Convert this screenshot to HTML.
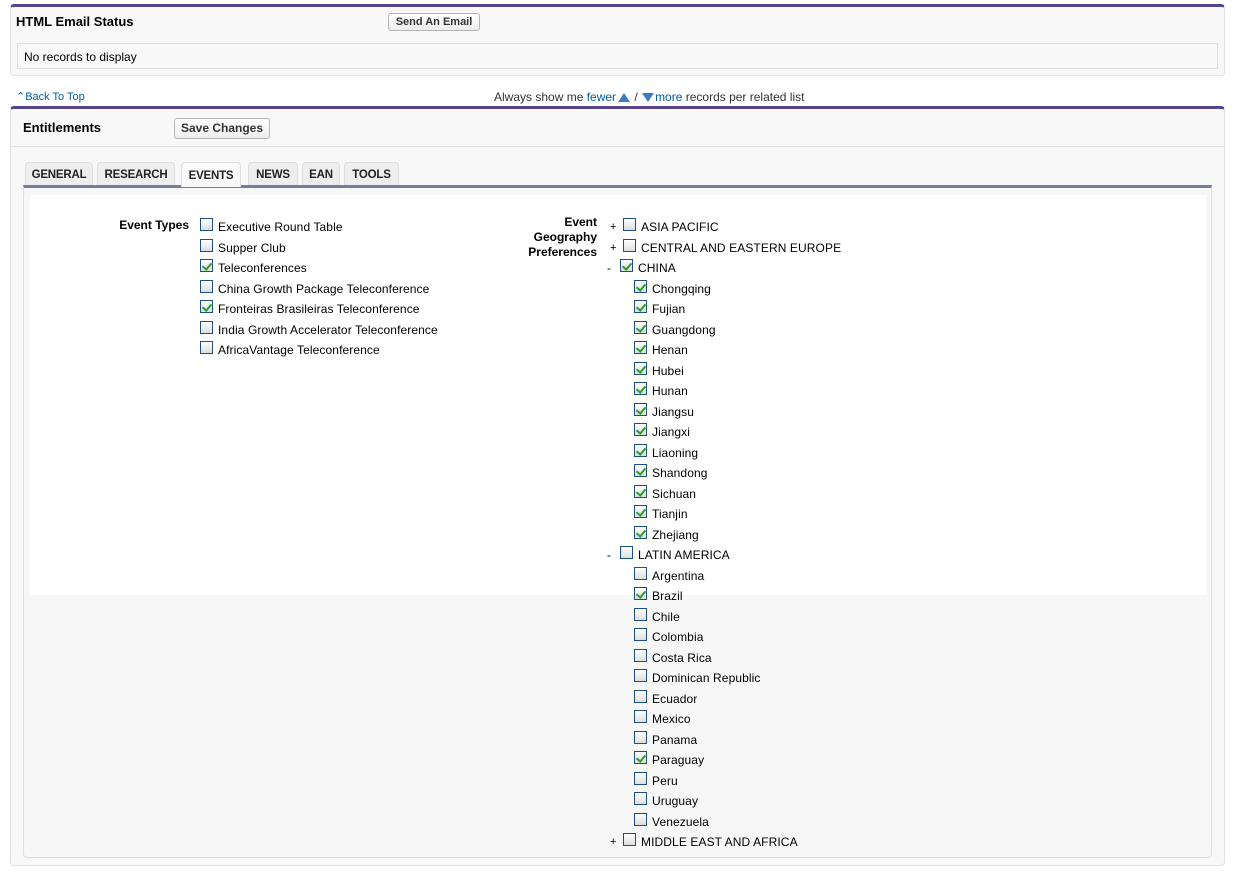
<!DOCTYPE html>
<html><head><meta charset="utf-8">
<style>
*{box-sizing:border-box;margin:0;padding:0}
body{width:1234px;height:874px;background:#fff;font-family:"Liberation Sans",Arial,sans-serif;font-size:12px;color:#000;position:relative;overflow:hidden}
.abs{position:absolute}
.panel{position:absolute;background:#f8f8f8;border:1px solid #e0e3e5;border-top:3px solid #56458c;border-radius:4px}
.btn{position:absolute;background:linear-gradient(#fff,#eee);border:1px solid #b5b5b5;border-radius:3px;font-weight:bold;font-size:12px;color:#333;text-align:center}
.tab{position:absolute;top:162px;height:24px;background:#eee;border:1px solid #ddd;border-bottom:none;border-radius:4px 4px 0 0;font-weight:bold;font-size:11.5px;letter-spacing:-0.2px;color:#222;text-align:center;line-height:24px}
.cb{position:absolute;width:13px;height:13px;border:1px solid #1d4f80;background:linear-gradient(#fff,#ddd);}
.cb.on::after{content:"";position:absolute;left:3px;top:1px;width:4px;height:7px;border:solid #2a9d2a;border-width:0 2px 2px 0;transform:rotate(40deg)}
.t{position:absolute;line-height:16px;font-size:12px;white-space:nowrap;margin-top:1px;letter-spacing:0.1px}
.lbl{position:absolute;font-weight:bold;font-size:12px;text-align:right;line-height:15px}
a{color:#015ba7;text-decoration:none}
.tri{display:inline-block;width:0;height:0;border-left:6px solid transparent;border-right:6px solid transparent;vertical-align:middle}
</style></head><body>

<div class="panel" style="left:10px;top:4px;width:1215px;height:72px"></div>
<div class="abs" style="left:16px;top:14px;font-weight:bold;font-size:13px">HTML Email Status</div>
<div class="btn" style="left:388px;top:13px;width:92px;height:18px;line-height:16px;font-size:11px">Send An Email</div>
<div class="abs" style="left:17px;top:43px;width:1201px;height:26px;border:1px solid #dcdfe2;background:#f8f8f8;padding:6px 0 0 6px">No records to display</div>

<div class="abs" style="left:16px;top:90px;font-size:11px"><a>&#8963;Back To Top</a></div>
<div class="abs" style="left:494px;top:90px;font-size:12px;color:#333">Always show me <a>fewer</a><span class="tri" style="border-bottom:9px solid #3d7cc4;margin:0 1px 0 2px"></span> / <span class="tri" style="border-top:9px solid #3d7cc4;margin:0 1px"></span><a>more</a> records per related list</div>

<div class="panel" style="left:10px;top:106px;width:1215px;height:760px"></div>
<div class="abs" style="left:10px;top:146px;width:1215px;height:1px;background:#e0e0e0"></div>
<div class="abs" style="left:23px;top:120px;font-weight:bold;font-size:13px">Entitlements</div>
<div class="btn" style="left:174px;top:118px;width:96px;height:21px;line-height:19px">Save Changes</div>

<div class="tab" style="left:25px;width:68px">GENERAL</div>
<div class="tab" style="left:97px;width:78px">RESEARCH</div>
<div class="tab" style="left:181px;width:60px;top:162px;height:25px;background:#fafafa;z-index:2;line-height:26px">EVENTS</div>
<div class="tab" style="left:248px;width:50px">NEWS</div>
<div class="tab" style="left:302px;width:38px">EAN</div>
<div class="tab" style="left:344px;width:55px">TOOLS</div>

<div class="abs" style="left:23px;top:185px;width:1189px;height:673px;border:1px solid #ddd;border-top:3px solid #737e9b;border-radius:0 0 4px 4px;background:#f7f7f7"></div>
<div class="abs" style="left:30px;top:195px;width:1176px;height:400px;background:#fff"></div>

<div class="lbl" style="left:100px;top:218px;width:89px">Event Types</div>
<div class="cb" style="left:200px;top:218px"></div><div class="t" style="left:218px;top:218px">Executive Round Table</div>
<div class="cb" style="left:200px;top:239px"></div><div class="t" style="left:218px;top:239px">Supper Club</div>
<div class="cb on" style="left:200px;top:259px"></div><div class="t" style="left:218px;top:259px">Teleconferences</div>
<div class="cb" style="left:200px;top:280px"></div><div class="t" style="left:218px;top:280px">China Growth Package Teleconference</div>
<div class="cb on" style="left:200px;top:300px"></div><div class="t" style="left:218px;top:300px">Fronteiras Brasileiras Teleconference</div>
<div class="cb" style="left:200px;top:321px"></div><div class="t" style="left:218px;top:321px">India Growth Accelerator Teleconference</div>
<div class="cb" style="left:200px;top:341px"></div><div class="t" style="left:218px;top:341px">AfricaVantage Teleconference</div>

<div class="lbl" style="left:500px;top:215px;width:97px">Event<br>Geography<br>Preferences</div>

<div class="t" style="left:610px;top:218px;font-size:11px">+</div><div class="cb" style="left:623px;top:218px"></div><div class="t" style="left:641px;top:218px">ASIA PACIFIC</div>
<div class="t" style="left:610px;top:239px;font-size:11px">+</div><div class="cb" style="left:623px;top:239px"></div><div class="t" style="left:641px;top:239px">CENTRAL AND EASTERN EUROPE</div>
<div class="t" style="left:607px;top:259px">-</div><div class="cb on" style="left:620px;top:259px"></div><div class="t" style="left:638px;top:259px">CHINA</div>

<div class="cb on" style="left:634px;top:280px"></div><div class="t" style="left:652px;top:280px">Chongqing</div>
<div class="cb on" style="left:634px;top:300px"></div><div class="t" style="left:652px;top:300px">Fujian</div>
<div class="cb on" style="left:634px;top:321px"></div><div class="t" style="left:652px;top:321px">Guangdong</div>
<div class="cb on" style="left:634px;top:341px"></div><div class="t" style="left:652px;top:341px">Henan</div>
<div class="cb on" style="left:634px;top:362px"></div><div class="t" style="left:652px;top:362px">Hubei</div>
<div class="cb on" style="left:634px;top:382px"></div><div class="t" style="left:652px;top:382px">Hunan</div>
<div class="cb on" style="left:634px;top:403px"></div><div class="t" style="left:652px;top:403px">Jiangsu</div>
<div class="cb on" style="left:634px;top:423px"></div><div class="t" style="left:652px;top:423px">Jiangxi</div>
<div class="cb on" style="left:634px;top:444px"></div><div class="t" style="left:652px;top:444px">Liaoning</div>
<div class="cb on" style="left:634px;top:464px"></div><div class="t" style="left:652px;top:464px">Shandong</div>
<div class="cb on" style="left:634px;top:485px"></div><div class="t" style="left:652px;top:485px">Sichuan</div>
<div class="cb on" style="left:634px;top:505px"></div><div class="t" style="left:652px;top:505px">Tianjin</div>
<div class="cb on" style="left:634px;top:526px"></div><div class="t" style="left:652px;top:526px">Zhejiang</div>

<div class="t" style="left:607px;top:546px">-</div><div class="cb" style="left:620px;top:546px"></div><div class="t" style="left:638px;top:546px">LATIN AMERICA</div>

<div class="cb" style="left:634px;top:567px"></div><div class="t" style="left:652px;top:567px">Argentina</div>
<div class="cb on" style="left:634px;top:587px"></div><div class="t" style="left:652px;top:587px">Brazil</div>
<div class="cb" style="left:634px;top:608px"></div><div class="t" style="left:652px;top:608px">Chile</div>
<div class="cb" style="left:634px;top:628px"></div><div class="t" style="left:652px;top:628px">Colombia</div>
<div class="cb" style="left:634px;top:649px"></div><div class="t" style="left:652px;top:649px">Costa Rica</div>
<div class="cb" style="left:634px;top:669px"></div><div class="t" style="left:652px;top:669px">Dominican Republic</div>
<div class="cb" style="left:634px;top:690px"></div><div class="t" style="left:652px;top:690px">Ecuador</div>
<div class="cb" style="left:634px;top:710px"></div><div class="t" style="left:652px;top:710px">Mexico</div>
<div class="cb" style="left:634px;top:731px"></div><div class="t" style="left:652px;top:731px">Panama</div>
<div class="cb on" style="left:634px;top:751px"></div><div class="t" style="left:652px;top:751px">Paraguay</div>
<div class="cb" style="left:634px;top:772px"></div><div class="t" style="left:652px;top:772px">Peru</div>
<div class="cb" style="left:634px;top:792px"></div><div class="t" style="left:652px;top:792px">Uruguay</div>
<div class="cb" style="left:634px;top:813px"></div><div class="t" style="left:652px;top:813px">Venezuela</div>

<div class="t" style="left:610px;top:833px;font-size:11px">+</div><div class="cb" style="left:623px;top:833px"></div><div class="t" style="left:641px;top:833px">MIDDLE EAST AND AFRICA</div>

</body></html>
